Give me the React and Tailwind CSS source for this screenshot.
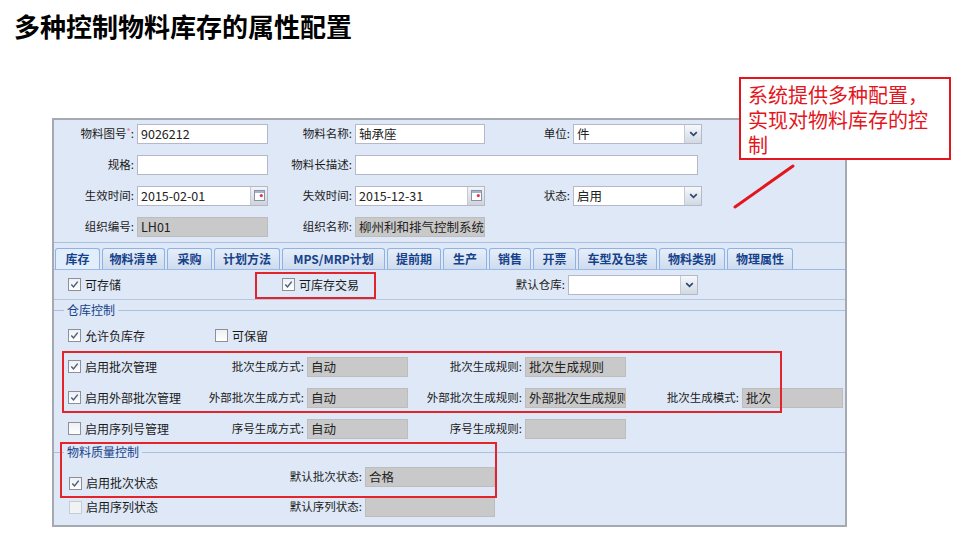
const tabs = [
  ['库存', 'w-[45px]', true],
  ['物料清单', 'w-[63px]'],
  ['采购', 'w-[45px]'],
  ['计划方法', 'w-[66px]'],
  ['MPS/MRP计划', 'w-[103px]'],
  ['提前期', 'w-[54px]'],
  ['生产', 'w-[44px]'],
  ['销售', 'w-[42px]'],
  ['开票', 'w-[43px]'],
  ['车型及包装', 'w-[79px]'],
  ['物料类别', 'w-[66px]'],
  ['物理属性', 'w-[66px]'],
]

function Label({ w, children }) {
  return (
    <div className={`${w} shrink-0 pr-[3px] text-right text-[11.5px] text-[#1a1a1a] whitespace-nowrap`}>
      {children}
    </div>
  )
}

function SelectBtn() {
  return (
    <div className="w-[17px] h-full shrink-0 border-l border-[#c3cad6] bg-linear-to-b from-[#f6f8fb] to-[#d2d9e3] flex items-center justify-center">
      <svg width="9" height="6" viewBox="0 0 9 6">
        <path d="M1.2 1.2 L4.5 4.4 L7.8 1.2" stroke="#2c4775" strokeWidth="1.7" fill="none" />
      </svg>
    </div>
  )
}

function DateBtn() {
  return (
    <div className="w-[17px] h-full shrink-0 border-l border-[#c3cad6] bg-linear-to-b from-[#f3f4f6] to-[#cfd3da] flex items-center justify-center">
      <svg width="11" height="11" viewBox="0 0 11 11">
        <rect x="0.5" y="0.5" width="10" height="10" fill="#fff" stroke="#8a93a3" />
        <rect x="1" y="1" width="9" height="2" fill="#9fb4d4" />
        <circle cx="7.3" cy="5.6" r="1.6" fill="#e0394a" />
      </svg>
    </div>
  )
}

function Field({ w, value, gray, trigger }) {
  return (
    <div
      className={`${w} h-[20px] shrink-0 flex border ${
        gray ? 'bg-[#c9c9c9] border-[#bdbdbd]' : 'bg-white border-[#b5b8c8]'
      }`}
    >
      <div className="flex-1 min-w-0 px-[3px] text-[12.5px] leading-[18px] text-[#222] overflow-hidden whitespace-nowrap">
        {value}
      </div>
      {trigger === 'select' && <SelectBtn />}
      {trigger === 'date' && <DateBtn />}
    </div>
  )
}

function Check({ on, dim, children }) {
  return (
    <div className="flex items-center gap-[4px] whitespace-nowrap">
      <span
        className={`w-[13px] h-[13px] shrink-0 border flex items-center justify-center ${
          dim ? 'border-[#c8cbd0] bg-[#f1f2f4]' : 'border-[#8d9096] bg-linear-to-b from-[#eef0f3] to-white'
        }`}
      >
        {on && (
          <svg width="9" height="9" viewBox="0 0 9 9">
            <path d="M1.3 4.6 L3.5 6.9 L7.7 1.6" stroke="#4d5e80" strokeWidth="1.5" fill="none" />
          </svg>
        )}
      </span>
      <span className="text-[12px] text-[#1a1a1a]">{children}</span>
    </div>
  )
}

function Legend({ children }) {
  return (
    <div className="h-full flex items-center">
      <div className="w-[10px] h-px bg-[#a9c0de]" />
      <span className="px-[3px] text-[12px] text-[#15428b]">{children}</span>
      <div className="flex-1 h-px bg-[#a9c0de]" />
    </div>
  )
}

export default function App() {
  return (
    <div className="relative w-[977px] h-[553px] bg-white overflow-hidden font-['Noto_Sans_CJK_SC','Noto_Sans',sans-serif]">
      <h1 className="pt-[10px] pl-[14px] text-[26px] leading-[32px] font-bold text-black">
        多种控制物料库存的属性配置
      </h1>

      <div className="ml-[52px] mt-[76px] w-[795px] h-[409px] border-2 border-[#a4a9b2] bg-[#dfe8f6] overflow-hidden">
        {/* 基本信息 */}
        <div className="-mt-[2px] border-b border-[#a9c0de]">
          <div className="h-[31px] flex items-center">
            <Label w="w-[83px]">
              物料图号<span className="text-[#ee6d8a] text-[9px] align-top">*</span>:
            </Label>
            <Field w="w-[131px]" value="9026212" />
            <Label w="w-[87px]">物料名称:</Label>
            <Field w="w-[130px]" value="轴承座" />
            <Label w="w-[88px]">单位:</Label>
            <Field w="w-[129px]" value="件" trigger="select" />
          </div>
          <div className="h-[31px] flex items-center">
            <Label w="w-[83px]">规格:</Label>
            <Field w="w-[131px]" value="" />
            <Label w="w-[87px]">物料长描述:</Label>
            <Field w="w-[343px]" value="" />
          </div>
          <div className="h-[31px] flex items-center">
            <Label w="w-[83px]">生效时间:</Label>
            <Field w="w-[131px]" value="2015-02-01" trigger="date" />
            <Label w="w-[87px]">失效时间:</Label>
            <Field w="w-[130px]" value="2015-12-31" trigger="date" />
            <Label w="w-[88px]">状态:</Label>
            <Field w="w-[129px]" value="启用" trigger="select" />
          </div>
          <div className="h-[31px] flex items-center">
            <Label w="w-[83px]">组织编号:</Label>
            <Field w="w-[131px]" value="LH01" gray />
            <Label w="w-[87px]">组织名称:</Label>
            <Field w="w-[130px]" value="柳州利和排气控制系统" gray />
          </div>
        </div>

        {/* 页签 */}
        <div className="pt-[5px] pl-[1px] flex gap-[2px] border-b border-[#99bbe8]">
          {tabs.map(([name, w, active]) => (
            <div
              key={name}
              className={`${w} h-[21px] shrink-0 flex items-center justify-center border border-b-0 border-[#8db2e3] rounded-t-[3px] text-[12px] font-bold text-[#15428b] whitespace-nowrap ${
                active ? 'bg-[#e3eefc]' : 'bg-linear-to-b from-[#e6eef9] to-[#cfdcef]'
              }`}
            >
              {name}
            </div>
          ))}
        </div>

        {/* 库存 */}
        <div className="h-[30px] flex items-center border-b border-[#b3c7e1]">
          <div className="w-[228px] pl-[14px]">
            <Check on>可存储</Check>
          </div>
          <div className="relative w-[150px] h-full flex items-center">
            <Check on>可库存交易</Check>
            <div className="absolute -left-[27px] top-[2px] w-[121px] h-[27px] border-2 border-[#e3242b]" />
          </div>
          <Label w="w-[136px]">默认仓库:</Label>
          <Field w="w-[130px]" value="" trigger="select" />
        </div>

        <div className="h-[20px]">
          <Legend>仓库控制</Legend>
        </div>
        <div className="h-[31px] flex items-center">
          <div className="w-[142px] pl-[14px]">
            <Check on>允许负库存</Check>
          </div>
          <div className="pl-[19px]">
            <Check>可保留</Check>
          </div>
        </div>
        <div className="relative">
          <div className="h-[31px] flex items-center">
            <div className="w-[142px] pl-[14px]">
              <Check on>启用批次管理</Check>
            </div>
            <Label w="w-[111px]">批次生成方式:</Label>
            <Field w="w-[101px]" value="自动" gray />
            <Label w="w-[117px]">批次生成规则:</Label>
            <Field w="w-[101px]" value="批次生成规则" gray />
          </div>
          <div className="h-[31px] flex items-center">
            <div className="w-[142px] pl-[14px]">
              <Check on>启用外部批次管理</Check>
            </div>
            <Label w="w-[111px]">外部批次生成方式:</Label>
            <Field w="w-[101px]" value="自动" gray />
            <Label w="w-[117px]">外部批次生成规则:</Label>
            <Field w="w-[101px]" value="外部批次生成规则" gray />
            <Label w="w-[116px]">批次生成模式:</Label>
            <Field w="w-[101px]" value="批次" gray />
          </div>
          <div className="absolute left-[8px] top-0 w-[720px] h-[62px] border-2 border-[#e3242b]" />
        </div>
        <div className="h-[31px] flex items-center">
          <div className="w-[142px] pl-[14px]">
            <Check>启用序列号管理</Check>
          </div>
          <Label w="w-[111px]">序号生成方式:</Label>
          <Field w="w-[101px]" value="自动" gray />
          <Label w="w-[117px]">序号生成规则:</Label>
          <Field w="w-[101px]" value="" gray />
        </div>

        {/* 物料质量控制 */}
        <div className="relative">
          <div className="h-[16px]">
            <Legend>物料质量控制</Legend>
          </div>
          <div className="h-[34px] flex items-center">
            <div className="w-[142px] pl-[15px] mt-[12px]">
              <Check on>启用批次状态</Check>
            </div>
            <Label w="w-[169px]">默认批次状态:</Label>
            <Field w="w-[130px]" value="合格" gray />
          </div>
          <div className="absolute left-[6px] -top-[2px] w-[437px] h-[56px] border-2 border-[#e3242b]" />
        </div>
        <div className="h-[26px] flex items-center">
          <div className="w-[142px] pl-[15px]">
            <Check dim>启用序列状态</Check>
          </div>
          <Label w="w-[169px]">默认序列状态:</Label>
          <Field w="w-[130px]" value="" gray />
        </div>
      </div>

      {/* 注释 */}
      <div className="absolute left-[739px] top-[77px] w-[212px] h-[83px] border-2 border-[#e3161d] bg-white pl-[7px] pr-[8px] pt-[3px] text-[20px] leading-[25px] text-[#e3161d]">
        系统提供多种配置，实现对物料库存的控制
      </div>
      <svg className="absolute left-[732px] top-[162px]" width="64" height="48" viewBox="0 0 64 48">
        <line x1="3" y1="45" x2="61" y2="4" stroke="#e3161d" strokeWidth="3" strokeLinecap="round" />
      </svg>
    </div>
  )
}
